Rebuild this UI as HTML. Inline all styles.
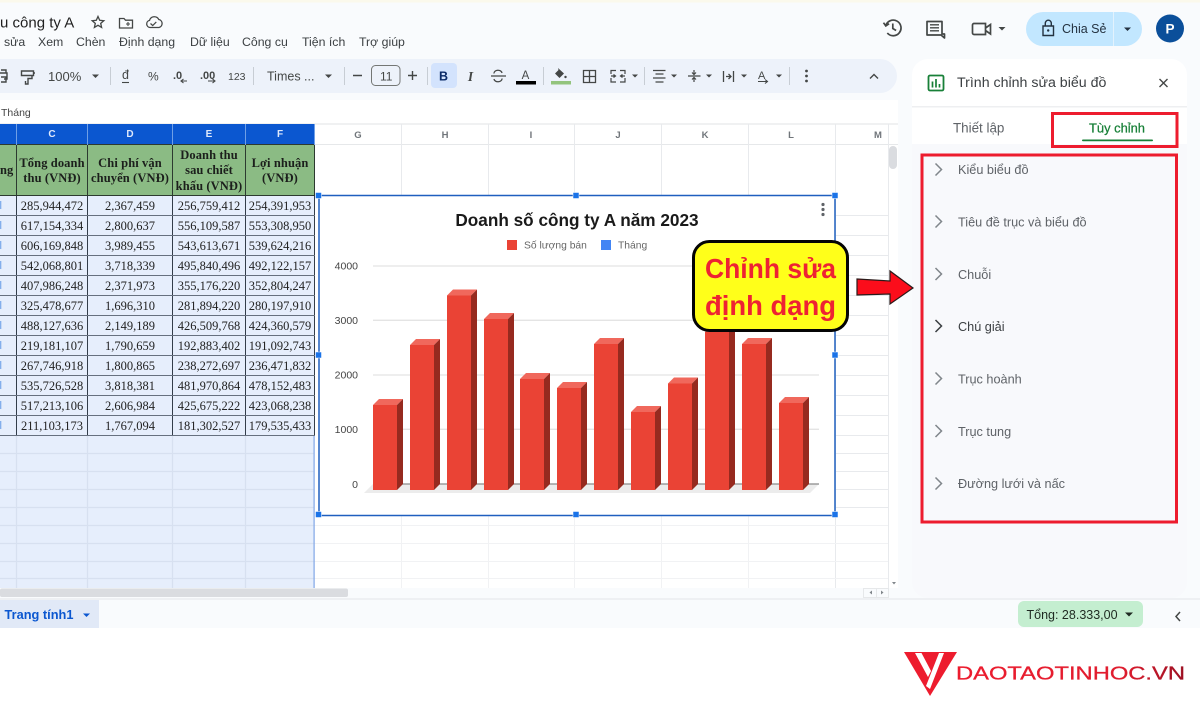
<!DOCTYPE html>
<html><head><meta charset="utf-8">
<style>
html,body{margin:0;padding:0;background:#fff;width:1200px;height:720px;overflow:hidden}
#root{position:relative;width:1200px;height:720px;overflow:hidden;font-family:"Liberation Sans",sans-serif;filter:blur(.35px)}
svg{position:absolute;left:0;top:0}
table{position:absolute;left:-1px;top:124px;width:315px;border-collapse:collapse;table-layout:fixed;font-family:"Liberation Serif",serif;font-size:12.5px;color:#222}
td{border:1px solid #66707f;border-left-color:#333d4a;border-right-color:#333d4a;padding:0;text-align:center;overflow:hidden;white-space:nowrap;height:19px;line-height:14px;background:#e6eefc}
tr.h td{background:#0b57d0;color:#dfe9fb;border:0;border-right:1px solid #6f9fe6;font:bold 10px "Liberation Sans",sans-serif;height:20px}
tr.g td{background:#8bbb84;height:48px;padding-top:2px;font-weight:bold;white-space:normal;line-height:15.5px;color:#1c1f1c;letter-spacing:.1px;border-color:#2c3a30}
</style></head><body><div id="root">
<svg width="1200" height="720" viewBox="0 0 1200 720" font-family="Liberation Sans, sans-serif">
<defs><linearGradient id="lg" x1="0" x2="1"><stop offset="0" stop-color="#ed1c2e"/><stop offset=".72" stop-color="#e01c2e"/><stop offset="1" stop-color="#9c1022"/></linearGradient></defs>
<rect width="1200" height="628" fill="#f9fbfd"/>
<rect width="1200" height="2.5" fill="#fbf9ec"/>
<rect x="0" y="628" width="1200" height="92" fill="#fff"/>
<!-- title and menu -->
<text x="0" y="27.500" font-size="15" fill="#1f1f1f">u công ty A</text>
<path d="M98 16.500l1.700 3.800 4.100.4-3.100 2.700.9 4-3.600-2.100-3.600 2.100.9-4-3.100-2.700 4.100-.4z" fill="none" stroke="#444746" stroke-width="1.300"/>
<path d="M119.500 18.500h4.500l1.500 1.700h7v7.800h-13z" fill="none" stroke="#444746" stroke-width="1.300"/><path d="M126 24h4M128 22v4" stroke="#444746" stroke-width="1.100"/>
<path d="M150 27.500a3.600 3.600 0 0 1-.5-7.100 5 5 0 0 1 9.300-.9 4.100 4.100 0 0 1 .2 8z" fill="none" stroke="#444746" stroke-width="1.300"/><path d="M150.500 23.500l2.200 2 3.600-3.600" fill="none" stroke="#444746" stroke-width="1.200"/>
<g font-size="12.300" fill="#3c4043">
<text x="4" y="46">sửa</text><text x="38" y="46">Xem</text><text x="76" y="46">Chèn</text><text x="119" y="46">Định dạng</text><text x="190" y="46">Dữ liệu</text><text x="242" y="46">Công cụ</text><text x="302" y="46">Tiện ích</text><text x="359" y="46">Trợ giúp</text>
</g>
<!-- toolbar -->
<path d="M0 59H880a17 17 0 0 1 0 34H0z" fill="#edf2fa"/>
<g stroke="#c7cdd4" stroke-width="1"><path d="M110.500 67v18M253.500 67v18M344.500 67v18M427.500 67v18M543.500 67v18M644.500 67v18M789.500 67v18"/></g>
<g fill="none" stroke="#444746" stroke-width="1.400">
<path d="M-1 73h8v6h-3M1 70h5v3M1 77h5v5h-5"/>
<path d="M21.500 71h12v4.500h-12zM33.500 73h1.500M27 75.500h5v3h-4v5.500h-2.500v-3"/>
</g>
<g fill="#444746" font-size="13">
<text x="48" y="81">100%</text>
<text x="122" y="79" font-size="12.500">đ</text>
<text x="148" y="80.500" font-size="12">%</text>
<text x="173" y="79" font-size="11" font-weight="bold">.0</text>
<text x="200" y="79" font-size="11" font-weight="bold">.00</text>
<text x="228" y="80" font-size="10.500">123</text>
<text x="267" y="80.500" font-size="12.500">Times ...</text>
<text x="380" y="80.500" font-size="12">11</text>
</g>
<path d="M122 82.500h7" stroke="#444746" stroke-width="1.100"/>
<g fill="none" stroke="#444746" stroke-width="1.100"><path d="M181 81h6M183.500 79l-2.500 2 2.500 2M208 81h7M212.500 79l2.500 2-2.500 2"/></g>
<g fill="#444746">
<path d="M92 74.500h7l-3.500 3.500zM325 74.500h7l-3.500 3.500zM632 74.500h6l-3 3zM671 74.500h6l-3 3zM706 74.500h6l-3 3zM741 74.500h6l-3 3zM776 74.500h6l-3 3z"/>
</g>
<path d="M353 75.500h9M408 75.500h9M412.500 71v9" stroke="#444746" stroke-width="1.400" fill="none"/>
<rect x="371.500" y="65.500" width="28.500" height="20" rx="4" fill="none" stroke="#747775"/>
<rect x="431" y="63" width="26" height="25" rx="4" fill="#d3e3fd"/>
<text x="443.500" y="80.500" font-size="12.500" font-weight="bold" text-anchor="middle" fill="#0a2a66">B</text>
<text x="470.500" y="81" font-size="13.500" font-style="italic" font-family="Liberation Serif, serif" font-weight="bold" text-anchor="middle" fill="#444746">I</text>
<path d="M491 76h15M494 73.500a4 3 0 0 1 8-.5M502 78.500a4 3 0 0 1-8 .5" fill="none" stroke="#444746" stroke-width="1.300"/>
<text x="525.500" y="79" font-size="11.500" text-anchor="middle" fill="#444746">A</text>
<rect x="516" y="81" width="20" height="3.500" fill="#000"/>
<path d="M558 68l6 5.500-4.500 4.500-4.500-4.500 3.500-3.500" fill="#444746"/><circle cx="565.500" cy="77" r="1.200" fill="#444746"/>
<rect x="551" y="81" width="20" height="3.500" fill="#93c47d"/>
<path d="M583.500 70.500h12v12h-12zM589.500 70.500v12M583.500 76.500h12" fill="none" stroke="#444746" stroke-width="1.300"/>
<path d="M611 74v-3.500h5M611 78v4h5M625 74v-3.500h-5M625 78v4h-5M611 76h4M625 76h-4M613.500 74.500l2 1.500-2 1.500M622.500 74.500l-2 1.500 2 1.500" fill="none" stroke="#444746" stroke-width="1.200"/>
<path d="M653 70.500h12.500M655.500 74h8M653 78h12.500M655.500 82h8" stroke="#444746" stroke-width="1.300"/>
<path d="M688 76h12.500M694 70v4.500M694 77.500V82M692 72.500l2 2 2-2M692 79.500l2-2 2 2" fill="none" stroke="#444746" stroke-width="1.200"/>
<path d="M723.500 71v11M733.500 71v11M726 76.500h5M728.500 74l2.500 2.500-2.500 2.500" fill="none" stroke="#444746" stroke-width="1.300"/>
<text x="758" y="79" font-size="11" fill="#444746">A</text><path d="M758 81.500h9M765 79.500l2.500 2-2.500 2" fill="none" stroke="#444746" stroke-width="1.100"/>
<g fill="#444746"><circle cx="806.500" cy="71" r="1.400"/><circle cx="806.500" cy="76" r="1.400"/><circle cx="806.500" cy="81" r="1.400"/></g>
<path d="M870 78.500l4-4 4 4" fill="none" stroke="#444746" stroke-width="1.400"/>
<!-- formula bar + grid -->
<rect x="0" y="100" width="898" height="488" fill="#fff"/>
<text x="1" y="116" font-size="10.500" fill="#444">Tháng</text>
<rect x="0" y="123.500" width="898" height="1" fill="#e1e3e6"/>
<rect x="314" y="144" width="584" height="1" fill="#e6e8ea"/>
<g stroke="#e8eaed" stroke-width="1" fill="none">
<path d="M401.500 124v71M488.500 124v71M574.500 124v71M661.500 124v71M748.500 124v71M835.500 124v464M888.500 124v464"/>
<path d="M835 215.500h53M835 235.500h53M835 255.500h53M835 275.500h53M835 295.500h53M835 315.500h53M835 335.500h53M835 355.500h53M835 375.500h53M835 395.500h53M835 415.500h53M835 435.500h53M835 453.500h53M835 471.500h53M835 489.500h53M835 507.500h53"/>
</g>
<g stroke="#f1f2f4" stroke-width="1" fill="none">
<path d="M314 525.500h574M314 543.500h574M314 561.500h574M314 578.500h574"/>
<path d="M401.500 515v73M488.500 515v73M574.500 515v73M661.500 515v73M748.500 515v73"/>
</g>
<g font-size="9.500" fill="#70757a" text-anchor="middle" font-weight="bold">
<text x="358" y="138">G</text><text x="445" y="138">H</text><text x="531" y="138">I</text><text x="618" y="138">J</text><text x="705" y="138">K</text><text x="791" y="138">L</text><text x="878" y="138">M</text>
</g>
<!-- selected empty area -->
<rect x="0" y="435" width="314" height="153" fill="#e6eefc"/>
<g stroke="#d7e0f0" stroke-width="1.200" fill="none">
<path d="M0 453.500h314M0 471.500h314M0 489.500h314M0 507.500h314M0 525.500h314M0 543.500h314M0 561.500h314M0 578.500h314"/>
<path d="M16.500 435v153M87.500 435v153M172.500 435v153M245.500 435v153"/>
</g>
<rect x="313.500" y="435" width="1.200" height="153" fill="#7fa6e6"/>
<!-- scrollbars -->
<rect x="889" y="146" width="8" height="23" rx="4" fill="#dadce0"/>
<rect x="0" y="588" width="898" height="10" fill="#f9fbfd"/>
<rect x="0" y="588.500" width="348" height="8.500" rx="2" fill="#dadce0"/>
<rect x="863.500" y="588.500" width="25" height="9" fill="none" stroke="#e6e8ea"/>
<path d="M876.500 588v10" stroke="#e6e8ea"/>
<path d="M881 590.500v4l2.500-2zM872 590.500v4l-2.500-2zM892 582h4l-2 2.500z" fill="#80868b"/>
<!-- sheet tab bar -->
<rect x="0" y="598" width="1200" height="2" fill="#eef0f3"/>
<rect x="0" y="600" width="99" height="28" fill="#e1e9f7"/>
<text x="4.500" y="619" font-size="12.800" font-weight="bold" fill="#0b57d0">Trang tính1</text>
<path d="M83 613.500h7l-3.500 3.500z" fill="#0b57d0"/>
<rect x="1018" y="601" width="125" height="26" rx="6" fill="#c4eed0"/>
<text x="1026.500" y="619" font-size="12.500" fill="#1f2a22">Tổng: 28.333,00</text>
<path d="M1125 612.500h8l-4 4z" fill="#1f2a22"/>
<path d="M1180 612l-4 4.500 4 4.500" fill="none" stroke="#444746" stroke-width="1.500"/>
<!-- top right -->
<g fill="none" stroke="#444746" stroke-width="1.700">
<path d="M885.800 25.500a7.800 7.800 0 1 1 1.500 7.500M883.500 22.700l2.300 3.300 3.300-2.300M892.800 23.500v5l3.300 2"/>
<path d="M927 21.500h15v12.500h2.500V38l-3.500-3h-14z" stroke-linejoin="round"/>
<path d="M930 24.800h9M930 27.800h9M930 30.800h9" stroke-width="1.300"/>
<path d="M974 23.500h11.500v11H974a1.500 1.500 0 0 1-1.500-1.500v-8a1.500 1.500 0 0 1 1.500-1.500zM985.500 28l5-3.500v9.500l-5-3.500"/>
</g>
<path d="M998.500 27h7l-3.500 3.500z" fill="#444746"/>
<path d="M1026 29a17 17 0 0 1 17-17h70v34h-70a17 17 0 0 1-17-17z" fill="#c2e7ff"/>
<path d="M1114 12h11a17 17 0 0 1 0 34h-11z" fill="#c2e7ff"/>
<rect x="1113" y="12" width="1" height="34" fill="#e3f2fd"/>
<path d="M1043 26h10.500v9.500H1043zM1045.300 26v-2.800a3 3 0 0 1 6 0V26" fill="none" stroke="#243240" stroke-width="1.400"/><circle cx="1048.200" cy="30.500" r="1.200" fill="#243240"/>
<text x="1062" y="33" font-size="12.500" fill="#243240">Chia Sẻ</text>
<path d="M1124 27.500h7l-3.500 3.500z" fill="#243240"/>
<circle cx="1170" cy="28.500" r="14" fill="#0b4f9a"/>
<text x="1170" y="33.500" font-size="13.500" fill="#fff" text-anchor="middle" font-weight="bold">P</text>
<!-- side panel -->
<path d="M912 144V75a16 16 0 0 1 16-16h243a16 16 0 0 1 16 16v69z" fill="#fff"/>
<path d="M912 144h275v438a16 16 0 0 1-16 16H928a16 16 0 0 1-16-16z" fill="#f8f9fc"/>
<rect x="912" y="106" width="275" height="1.500" fill="#eeeff1"/>
<rect x="928.500" y="75.500" width="15" height="15" rx="1.500" fill="none" stroke="#188038" stroke-width="1.800"/>
<path d="M932.500 81.500v6M936 79v8.500M939.500 84v3.500" stroke="#188038" stroke-width="1.700"/>
<text x="957" y="87" font-size="14.200" fill="#3c4043">Trình chỉnh sửa biểu đồ</text>
<path d="M1159.500 79l8 8M1167.500 79l-8 8" stroke="#444746" stroke-width="1.400"/>
<text x="953" y="132.500" font-size="13.400" fill="#5f6368">Thiết lập</text>
<text x="1089" y="132.500" font-size="13" fill="#188038" textLength="56" lengthAdjust="spacingAndGlyphs" stroke="#188038" stroke-width=".25">Tùy chỉnh</text>
<rect x="1082" y="139.500" width="71" height="1.800" rx=".9" fill="#188038"/>
<rect x="1052.500" y="113.500" width="124.500" height="33" fill="none" stroke="#ed1c2e" stroke-width="3"/>
<rect x="922" y="155" width="254.500" height="367" fill="none" stroke="#ed1c2e" stroke-width="3"/>
<g fill="none" stroke="#80868b" stroke-width="1.500">
<path d="M935.500 163.500l6 6-6 6M935.500 215.500l6 6-6 6M935.500 268l6 6-6 6M935.500 372.500l6 6-6 6M935.500 425l6 6-6 6M935.500 477.500l6 6-6 6"/>
<path d="M935.500 320l6 6-6 6" stroke="#3c4043"/>
</g>
<g font-size="12.700" fill="#5f6368">
<text x="958" y="174">Kiểu biểu đồ</text>
<text x="958" y="226.500">Tiêu đề trục và biểu đồ</text>
<text x="958" y="279">Chuỗi</text>
<text x="958" y="331" fill="#3c4043">Chú giải</text>
<text x="958" y="383.500">Trục hoành</text>
<text x="958" y="436">Trục tung</text>
<text x="958" y="488">Đường lưới và nấc</text>
</g>
<!-- chart -->
<rect x="319" y="195.500" width="516" height="320" fill="#fff"/>
<text x="577" y="226" font-size="17.200" font-weight="bold" text-anchor="middle" fill="#1a1a1a">Doanh số công ty A năm 2023</text>
<rect x="507" y="240" width="10" height="10" fill="#ea4335"/>
<text x="524" y="248.500" font-size="10.300" fill="#666">Số lượng bán</text>
<rect x="601" y="240" width="10" height="10" fill="#4285f4"/>
<text x="618" y="248.500" font-size="10.300" fill="#666">Tháng</text>
<g font-size="10.500" fill="#444" text-anchor="end">
<text x="358" y="269.500">4000</text><text x="358" y="324">3000</text><text x="358" y="378.500">2000</text><text x="358" y="433">1000</text><text x="358" y="488">0</text>
</g>
<g stroke="#e4e4e4" stroke-width="1.300"><path d="M373 266h446M373 320.300h446M373 375h446M373 429.300h446"/></g>
<path d="M373 484h446l-9 9H364z" fill="#ececec"/>
<path d="M373 484h446" stroke="#8a8a8a" stroke-width="1.200"/>
<g id="bars">
<path d="M373 405l6-6h24l-6 6z" fill="#f0685c"/><path d="M397 405l6-6v85l-6 6z" fill="#962a1f"/><rect x="373" y="405" width="24" height="85" fill="#ea4335"/>
<path d="M410 345l6-6h24l-6 6z" fill="#f0685c"/><path d="M434 345l6-6v145l-6 6z" fill="#962a1f"/><rect x="410" y="345" width="24" height="145" fill="#ea4335"/>
<path d="M447 295.500l6-6h24l-6 6z" fill="#f0685c"/><path d="M471 295.500l6-6v194.500l-6 6z" fill="#962a1f"/><rect x="447" y="295.500" width="24" height="194.500" fill="#ea4335"/>
<path d="M484 319l6-6h24l-6 6z" fill="#f0685c"/><path d="M508 319l6-6v171l-6 6z" fill="#962a1f"/><rect x="484" y="319" width="24" height="171" fill="#ea4335"/>
<path d="M520 379l6-6h24l-6 6z" fill="#f0685c"/><path d="M544 379l6-6v111l-6 6z" fill="#962a1f"/><rect x="520" y="379" width="24" height="111" fill="#ea4335"/>
<path d="M557 388l6-6h24l-6 6z" fill="#f0685c"/><path d="M581 388l6-6v102l-6 6z" fill="#962a1f"/><rect x="557" y="388" width="24" height="102" fill="#ea4335"/>
<path d="M594 344l6-6h24l-6 6z" fill="#f0685c"/><path d="M618 344l6-6v146l-6 6z" fill="#962a1f"/><rect x="594" y="344" width="24" height="146" fill="#ea4335"/>
<path d="M631 412l6-6h24l-6 6z" fill="#f0685c"/><path d="M655 412l6-6v78l-6 6z" fill="#962a1f"/><rect x="631" y="412" width="24" height="78" fill="#ea4335"/>
<path d="M668 383.500l6-6h24l-6 6z" fill="#f0685c"/><path d="M692 383.500l6-6v106.500l-6 6z" fill="#962a1f"/><rect x="668" y="383.500" width="24" height="106.500" fill="#ea4335"/>
<path d="M705 332l6-6h24l-6 6z" fill="#f0685c"/><path d="M729 332l6-6v158l-6 6z" fill="#962a1f"/><rect x="705" y="332" width="24" height="158" fill="#ea4335"/>
<path d="M742 344l6-6h24l-6 6z" fill="#f0685c"/><path d="M766 344l6-6v146l-6 6z" fill="#962a1f"/><rect x="742" y="344" width="24" height="146" fill="#ea4335"/>
<path d="M779 403l6-6h24l-6 6z" fill="#f0685c"/><path d="M803 403l6-6v87l-6 6z" fill="#962a1f"/><rect x="779" y="403" width="24" height="87" fill="#ea4335"/>
</g>
<g fill="#5f6368"><circle cx="823" cy="204.500" r="1.600"/><circle cx="823" cy="209.500" r="1.600"/><circle cx="823" cy="214.500" r="1.600"/></g>
<!-- selection frame -->
<rect x="319" y="195.500" width="516" height="320" fill="none" stroke="#1f5fbf" stroke-width="1.500"/>
<g fill="#1a73e8" stroke="#fff" stroke-width=".5">
<rect x="315.500" y="192.500" width="6" height="6"/><rect x="573" y="192.500" width="6" height="6"/><rect x="832" y="192.500" width="6" height="6"/>
<rect x="315.500" y="352" width="6" height="6"/><rect x="832" y="352" width="6" height="6"/>
<rect x="315.500" y="511.500" width="6" height="6"/><rect x="573" y="511.500" width="6" height="6"/><rect x="832" y="511.500" width="6" height="6"/>
</g>
<!-- callout -->
<rect x="693.500" y="241.500" width="154" height="89" rx="16" fill="#ffff1a" stroke="#050505" stroke-width="3"/>
<g font-size="28" font-weight="bold" fill="#ee2233" text-anchor="middle">
<text x="770.500" y="278" textLength="131" lengthAdjust="spacingAndGlyphs">Chỉnh sửa</text>
<text x="770.500" y="315" textLength="131" lengthAdjust="spacingAndGlyphs">định dạng</text>
</g>
<!-- arrow -->
<path d="M857 279l33 2v-10l23 17-23 16v-10l-33 1z" fill="#fb0d1b" stroke="#2a1a1a" stroke-width="1.200" stroke-linejoin="miter"/>
<!-- logo -->
<path d="M904 652h53l-27 44z" fill="#ed1c2e"/>
<path d="M915 653l13 24 3 -6-9.500-18zM939 653l-13 33 4 3 14-36z" fill="#fff"/>
<text x="956" y="679.500" font-size="18.500" fill="url(#lg)" stroke="url(#lg)" stroke-width=".3" textLength="229" lengthAdjust="spacingAndGlyphs">DAOTAOTINHOC.VN</text>
</svg>
<table>
<colgroup><col style="width:17px"><col style="width:71px"><col style="width:85px"><col style="width:73px"><col style="width:69px"></colgroup>
<tr class="h"><td></td><td>C</td><td>D</td><td>E</td><td>F</td></tr>
<tr class="g"><td style="text-align:right;padding-right:4px">ng</td><td>Tổng doanh thu (VNĐ)</td><td>Chi phí vận chuyển (VNĐ)</td><td>Doanh thu sau chiết khấu (VNĐ)</td><td>Lợi nhuận (VNĐ)</td></tr>
<tr><td></td><td>285,944,472</td><td>2,367,459</td><td>256,759,412</td><td>254,391,953</td></tr>
<tr><td></td><td>617,154,334</td><td>2,800,637</td><td>556,109,587</td><td>553,308,950</td></tr>
<tr><td></td><td>606,169,848</td><td>3,989,455</td><td>543,613,671</td><td>539,624,216</td></tr>
<tr><td></td><td>542,068,801</td><td>3,718,339</td><td>495,840,496</td><td>492,122,157</td></tr>
<tr><td></td><td>407,986,248</td><td>2,371,973</td><td>355,176,220</td><td>352,804,247</td></tr>
<tr><td></td><td>325,478,677</td><td>1,696,310</td><td>281,894,220</td><td>280,197,910</td></tr>
<tr><td></td><td>488,127,636</td><td>2,149,189</td><td>426,509,768</td><td>424,360,579</td></tr>
<tr><td></td><td>219,181,107</td><td>1,790,659</td><td>192,883,402</td><td>191,092,743</td></tr>
<tr><td></td><td>267,746,918</td><td>1,800,865</td><td>238,272,697</td><td>236,471,832</td></tr>
<tr><td></td><td>535,726,528</td><td>3,818,381</td><td>481,970,864</td><td>478,152,483</td></tr>
<tr><td></td><td>517,213,106</td><td>2,606,984</td><td>425,675,222</td><td>423,068,238</td></tr>
<tr><td></td><td>211,103,173</td><td>1,767,094</td><td>181,302,527</td><td>179,535,433</td></tr>
</table>
<svg width="4" height="440" viewBox="0 0 4 440"><path d="M.7 201v240" stroke="#7aa8ea" stroke-width="1.200" stroke-dasharray="8 12" fill="none"/></svg>
</div></body></html>
